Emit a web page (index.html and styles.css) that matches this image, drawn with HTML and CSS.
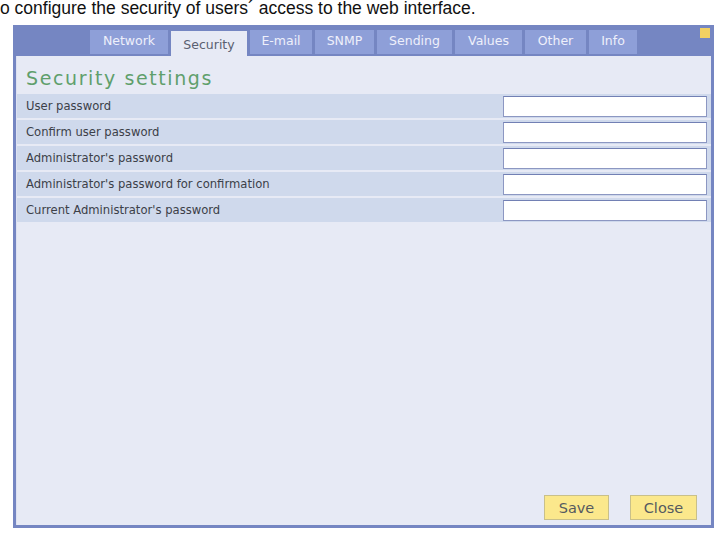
FILE: index.html
```html
<!DOCTYPE html>
<html>
<head>
<meta charset="utf-8">
<link rel="stylesheet" href="styles.css">
</head>
<body>
<p class="intro">o configure the security of users´ access to the web interface.</p>
<div class="window">
  <div class="header">
    <div class="tabs">
      <div class="tab">Network</div>
      <div class="tab active">Security</div>
      <div class="tab">E-mail</div>
      <div class="tab">SNMP</div>
      <div class="tab">Sending</div>
      <div class="tab">Values</div>
      <div class="tab">Other</div>
      <div class="tab">Info</div>
    </div>
    <div class="marker"></div>
  </div>
  <div class="content">
    <h1 class="title">Security settings</h1>
    <div class="rows">
      <div class="row"><span class="label">User password</span><input class="field" type="password"></div>
      <div class="row"><span class="label">Confirm user password</span><input class="field" type="password"></div>
      <div class="row"><span class="label">Administrator's password</span><input class="field" type="password"></div>
      <div class="row"><span class="label">Administrator's password for confirmation</span><input class="field" type="password"></div>
      <div class="row"><span class="label">Current Administrator's password</span><input class="field" type="password"></div>
    </div>
    <div class="spacer"></div>
    <div class="actions">
      <button class="btn">Save</button>
      <button class="btn">Close</button>
    </div>
  </div>
</div>
</body>
</html>
```
FILE: styles.css
```css
html, body {
  margin: 0;
  padding: 0;
  background: #ffffff;
}
body {
  width: 718px;
  height: 543px;
  overflow: hidden;
}
.intro {
  margin: 0;
  height: 22px;
  font-family: "Liberation Sans", Arial, sans-serif;
  font-size: 17.5px;
  line-height: 16px;
  color: #111;
}
.window {
  margin-left: 13px;
  margin-top: 3px;
  width: 701px;
  height: 503px;
  box-sizing: border-box;
  background: #7586c2;
  padding: 0 3px 3px 3px;
  display: flex;
  flex-direction: column;
}
.header {
  height: 31px;
  display: flex;
  align-items: flex-end;
  justify-content: space-between;
  flex-shrink: 0;
}
.tabs {
  display: flex;
  align-items: flex-end;
  gap: 3px;
  margin-left: 74px;
}
.tab {
  height: 24px;
  margin-bottom: 2px;
  background: #8e9fd8;
  color: #eef0fb;
  font-family: "DejaVu Sans", Verdana, sans-serif;
  font-size: 12.5px;
  line-height: 22px;
  box-sizing: border-box;
  text-align: center;
}
.tab:nth-child(1) { width: 78px; }
.tab:nth-child(2) { width: 76px; }
.tab:nth-child(3) { width: 62px; }
.tab:nth-child(4) { width: 59px; }
.tab:nth-child(5) { width: 75px; }
.tab:nth-child(6) { width: 67px; }
.tab:nth-child(7) { width: 61px; }
.tab:nth-child(8) { width: 48px; }
.tab.active {
  background: #e7eaf5;
  color: #5a6070;
  height: 25px;
  margin-bottom: 0;
  line-height: 28px;
}
.marker {
  width: 10px;
  height: 10px;
  background: #f2d062;
  margin-bottom: 18px;
  margin-right: 1px;
}
.content {
  flex: 1;
  background: #e7eaf5;
  display: flex;
  flex-direction: column;
  border-left: 1px solid #dde1f0;
}
.title {
  margin: 0;
  padding: 10px 0 0 9px;
  height: 38px;
  box-sizing: border-box;
  font-family: "DejaVu Sans", Verdana, sans-serif;
  font-weight: normal;
  font-size: 19px;
  letter-spacing: 1.6px;
  color: #5f9f6c;
  line-height: 24px;
}
.rows {
  display: flex;
  flex-direction: column;
  gap: 2px;
}
.row {
  height: 24px;
  background: #cfd9ec;
  display: flex;
  align-items: center;
  justify-content: space-between;
  padding: 0 4px 0 9px;
}
.label {
  font-family: "DejaVu Sans", Verdana, sans-serif;
  font-size: 11.6px;
  color: #3c4048;
}
.field {
  width: 204px;
  height: 21px;
  box-sizing: border-box;
  border: 1px solid #8c97c2;
  border-top-color: #7280b4;
  background: #ffffff;
  margin: 0;
  padding: 0;
}
.spacer {
  flex: 1;
}
.actions {
  display: flex;
  justify-content: flex-end;
  gap: 21px;
  padding: 0 14px 5px 0;
}
.btn {
  height: 25px;
  background: #fbe88c;
  border: 1px solid #c9c08a;
  font-family: "DejaVu Sans", Verdana, sans-serif;
  font-size: 14.5px;
  color: #555a60;
  padding: 0;
  margin: 0;
}
.btn:first-child { width: 65px; }
.btn:last-child { width: 67px; }
```
